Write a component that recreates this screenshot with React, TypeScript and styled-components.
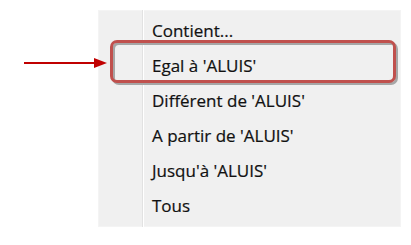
import styled, { createGlobalStyle } from "styled-components";

const items = [
  "Contient...",
  "Egal à 'ALUIS'",
  "Différent de 'ALUIS'",
  "A partir de 'ALUIS'",
  "Jusqu'à 'ALUIS'",
  "Tous",
];

export default function App() {
  return (
    <>
      <GlobalStyle />
      <Page>
        <Arrow width="84" height="12" viewBox="0 0 84 12">
          <line x1="0" y1="6" x2="72" y2="6" stroke="#c00000" strokeWidth="2" />
          <polygon points="70,1 83,6 70,11" fill="#c00000" />
        </Arrow>
        <Menu>
          <Gutter />
          <List>
            {items.map((label, i) => (
              <Item key={label}>
                {label}
                {i === 1 && (
                  <>
                    <Shadow />
                    <Highlight />
                  </>
                )}
              </Item>
            ))}
          </List>
        </Menu>
      </Page>
    </>
  );
}

/* ---------------- styled-components ---------------- */

const GlobalStyle = createGlobalStyle`
  html, body {
    margin: 0;
    padding: 0;
    background: #ffffff;
  }
`;

const Page = styled.div`
  position: relative;
  width: 411px;
  height: 245px;
  padding: 10px 0 0 98px;
  box-sizing: border-box;
`;

const Arrow = styled.svg`
  position: absolute;
  left: 24px;
  top: 57px;
`;

const Menu = styled.div`
  display: flex;
  width: 303px;
  height: 217px;
  background: #f0f0f0;
  box-shadow: inset 0 0 0 1px #f4f4f4;
`;

const Gutter = styled.div`
  width: 44px;
  border-right: 1px solid #e2e2e2;
  box-shadow: 1px 0 0 #ffffff;
`;

const List = styled.div`
  display: flex;
  flex-direction: column;
  padding: 3px 0 0 9px;
  flex: 1;
`;

const Item = styled.div`
  position: relative;
  height: 35px;
  line-height: 35px;
  font-family: "Open Sans", "Noto Sans", sans-serif;
  font-size: 17px;
  color: #111;
  -webkit-text-stroke: 0.2px #111;
`;

const Highlight = styled.div`
  position: absolute;
  left: -42px;
  top: -8px;
  width: 280px;
  height: 37px;
  border: 3px solid #c0504d;
  border-radius: 7px;
`;

const Shadow = styled(Highlight)`
  left: -40px;
  top: -6px;
  border-color: #a6a6a6;
`;
